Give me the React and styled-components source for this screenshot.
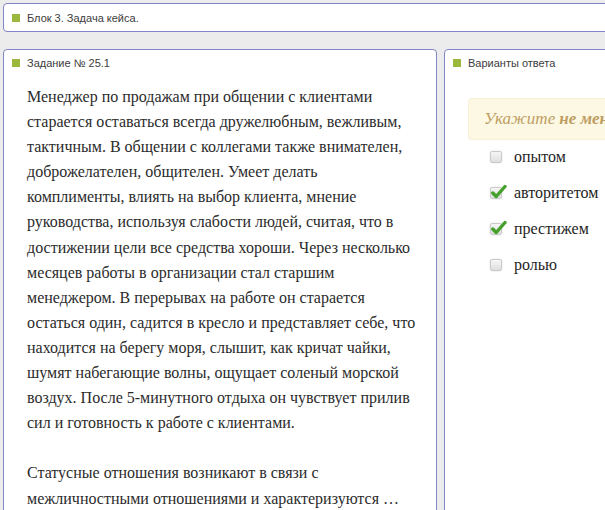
import React from 'react';
import styled, {createGlobalStyle} from "styled-components";

const GlobalStyle = createGlobalStyle`
html, body{
margin: 0;
padding: 0;
overflow: hidden;
background: #ececec;
}
body{
font-family: "Liberation Sans", Arial, sans-serif;
}
`;

const Page = styled.div`
width: 640px;
padding: 3px 3px 0;
box-sizing: border-box;
`;
const Box = styled.div`
background: #ffffff;
border: 1px solid #8286c4;
border-radius: 4px;
box-sizing: border-box;
`;
const TopBar = styled(Box)`
height: 29px;
display: flex;
align-items: center;
`;
const Columns = styled.div`
display: flex;
gap: 7px;
margin-top: 17px;
align-items: flex-start;
`;
const Panel = styled(Box)`
width: ${props => props.w}px;
min-height: 520px;
flex-shrink: 0;
`;
const Head = styled.div`
display: flex;
align-items: center;
gap: 7px;
height: ${props => props.h || 26}px;
padding-left: 8px;
font-size: 11px;
color: #3c3c3c;
&:before{
content: "";
width: 8px;
height: 8px;
background: #9cb83c;
}
`;
const Text = styled.div`
padding: 8px 20px 0 23px;
font-family: "Liberation Serif", "Times New Roman", serif;
font-size: 16px;
line-height: 25.1px;
color: #2b2b2b;
p{
margin: 0 0 25.1px;
}
`;
const Alert = styled.div`
margin: 22px 0 0 23px;
height: 40px;
padding-left: 15px;
display: flex;
align-items: center;
background: #fcf8e4;
border: 1px solid #f8f0d8;
border-right: none;
border-radius: 4px 0 0 4px;
font-family: "Liberation Serif", "Times New Roman", serif;
font-style: italic;
font-size: 17px;
color: #bf9e63;
white-space: nowrap;
overflow: hidden;
b{
margin: 0 4px;
}
`;
const Options = styled.div`
display: flex;
flex-direction: column;
gap: 16px;
padding: 7px 0 0 45px;
`;
const Option = styled.label`
display: flex;
align-items: center;
gap: 12px;
height: 20px;
font-family: "Liberation Serif", "Times New Roman", serif;
font-size: 16px;
color: #1e1e1e;
`;
const Check = styled.span`
position: relative;
width: 12px;
height: 12px;
box-sizing: border-box;
border: 1px solid #cbcbcb;
border-radius: 2px;
background: linear-gradient(#f6f6f6, #dedede);
box-shadow: 0 0 2px rgba(0,0,0,.15);
svg{
position: absolute;
left: 0;
top: -4px;
}
`;

const variants = [
    {label: "опытом", checked: false},
    {label: "авторитетом", checked: true},
    {label: "престижем", checked: true},
    {label: "ролью", checked: false},
];

const Tick = () => (
    <svg width="16" height="15" viewBox="0 0 16 15">
        <path d="M1.8 9 L5.2 12.5 L14 2.5" fill="none" stroke="#45a12b" strokeWidth="3.4" strokeLinecap="round" strokeLinejoin="round"/>
    </svg>
);

const App = () => {
    return (
        <Page>
            <GlobalStyle/>
            <TopBar>
                <Head h={27}>Блок 3. Задача кейса.</Head>
            </TopBar>
            <Columns>
                <Panel w={434}>
                    <Head>Задание № 25.1</Head>
                    <Text>
                        <p>Менеджер по продажам при общении с клиентами старается оставаться всегда дружелюбным, вежливым, тактичным. В общении с коллегами также внимателен, доброжелателен, общителен. Умеет делать комплименты, влиять на выбор клиента, мнение руководства, используя слабости людей, считая, что в достижении цели все средства хороши. Через несколько месяцев работы в организации стал старшим менеджером. В перерывах на работе он старается остаться один, садится в кресло и представляет себе, что находится на берегу моря, слышит, как кричат чайки, шумят набегающие волны, ощущает соленый морской воздух. После 5-минутного отдыха он чувствует прилив сил и готовность к работе с клиентами.</p>
                        <p>Статусные отношения возникают в связи с межличностными отношениями и характеризуются …</p>
                    </Text>
                </Panel>
                <Panel w={200}>
                    <Head>Варианты ответа</Head>
                    <Alert>Укажите<b>не менее двух</b>вариантов ответа</Alert>
                    <Options>
                        {variants.map(v => (
                            <Option key={v.label}>
                                <Check>{v.checked && <Tick/>}</Check>
                                {v.label}
                            </Option>
                        ))}
                    </Options>
                </Panel>
            </Columns>
        </Page>
    )
};

export default App
